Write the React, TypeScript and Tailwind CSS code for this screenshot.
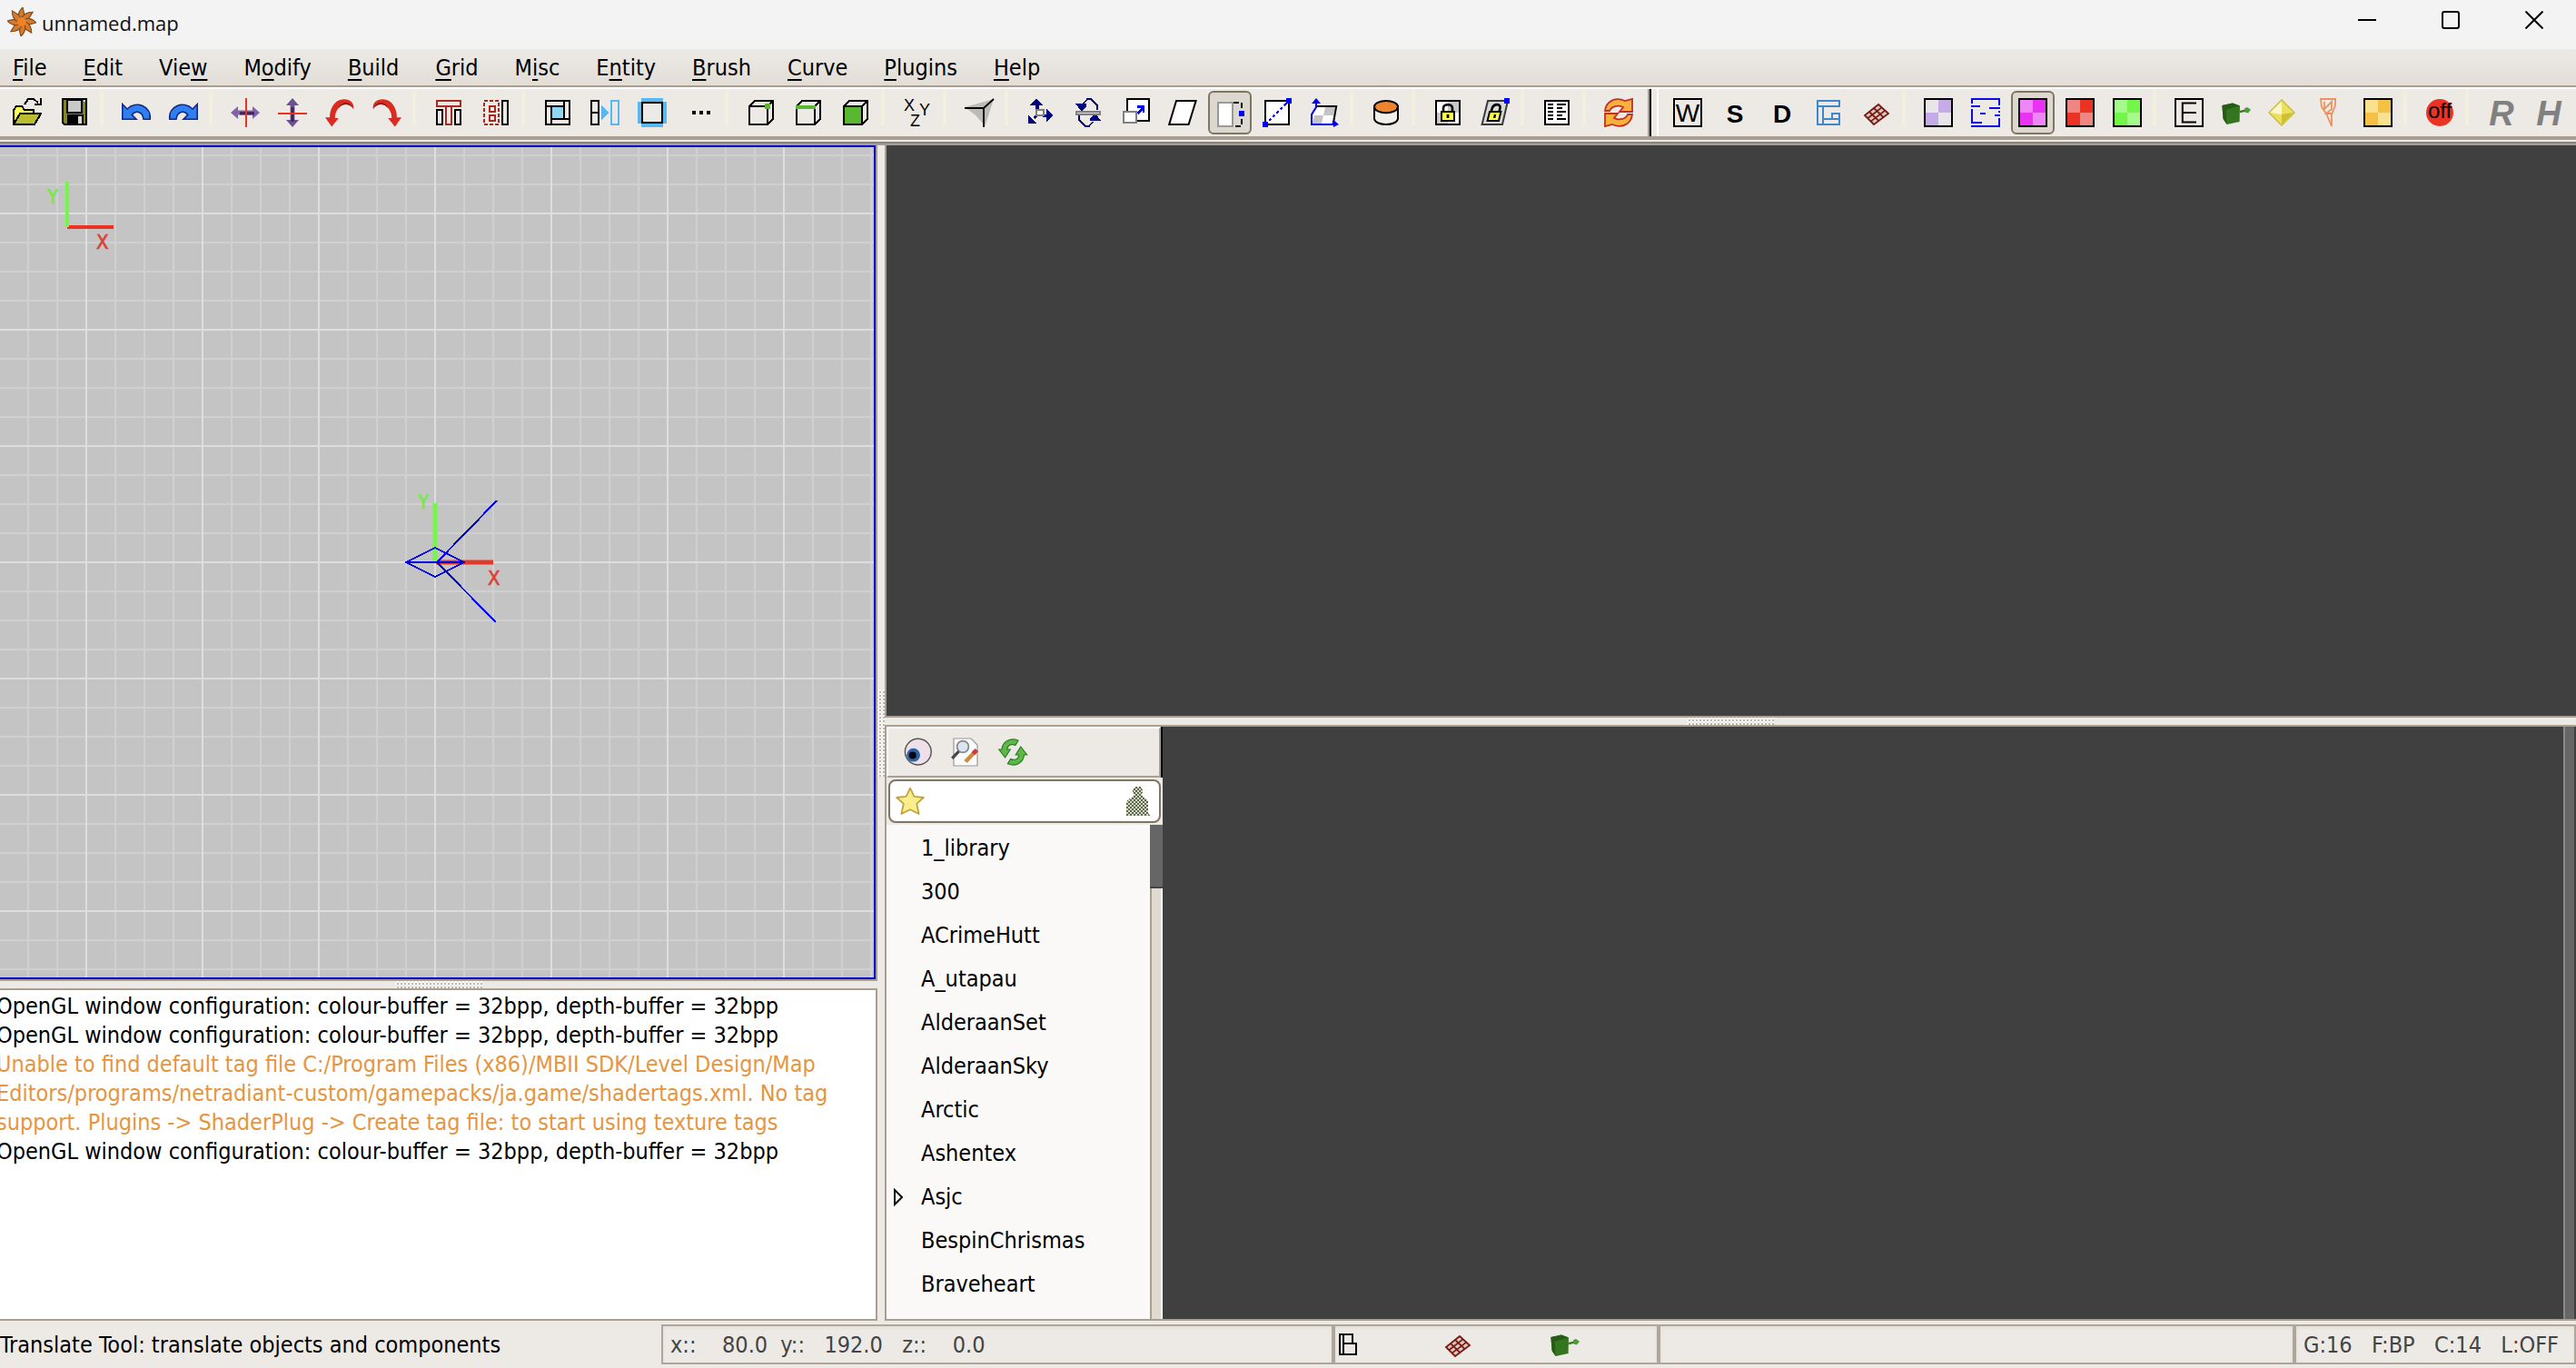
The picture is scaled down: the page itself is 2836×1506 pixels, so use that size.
import { Fragment, type ReactNode } from 'react'
import clsx from 'clsx'

type Tool = { name: string; icon: ReactNode; active?: boolean }

function Icon(props: { children: ReactNode; smooth?: boolean }) {
  return (
    <svg
      viewBox="0 0 16 16"
      className="h-8 w-8 shrink-0 overflow-visible"
      fill="none"
      stroke="none"
      shapeRendering={props.smooth ? 'auto' : 'crispEdges'}
      aria-hidden="true"
    >
      {props.children}
    </svg>
  )
}

function Letter(props: {
  children: string
  size?: number
  y?: number
  fill?: string
  bold?: boolean
  italic?: boolean
}) {
  return (
    <text
      x="8"
      y={props.y ?? 13}
      textAnchor="middle"
      fontFamily="Liberation Sans, sans-serif"
      fontSize={props.size ?? 14}
      fontWeight={props.bold ? 700 : 400}
      fontStyle={props.italic ? 'italic' : 'normal'}
      fill={props.fill ?? '#000'}
    >
      {props.children}
    </text>
  )
}

function Checks(props: { light: string; dark: string }) {
  return (
    <Icon>
      <path d="M0 0H16V16H0Z" fill="#000" />
      <path d="M1 1H15V15H1Z" fill={props.light} />
      <path d="M8 1H15V8H8ZM1 8H8V15H1Z" fill={props.dark} />
    </Icon>
  )
}

function Cube(props: { children?: ReactNode }) {
  return (
    <Icon>
      <path
        d="M1.5 4.5H11.5V14.5H1.5ZM4.5 1.5H14.5V11.5M1.5 4.5L4.5 1.5M11.5 4.5L14.5 1.5M11.5 14.5L14.5 11.5"
        stroke="#000"
      />
      {props.children}
    </Icon>
  )
}

function PatchIcon() {
  return (
    <Icon smooth>
      <path d="M1.5 9.5L9 3.5L14.5 8.5L6.5 14.5Z" fill="#d8c8c4" />
      <path
        d="M1.5 9.5L9 3.5L14.5 8.5L6.5 14.5ZM4 7.5L9.2 12.6M6.5 5.5L11.8 10.6M3.1 11.1L10.8 5.2M4.8 12.8L12.7 6.8"
        stroke="#7a1a10"
        strokeWidth="0.9"
      />
    </Icon>
  )
}

function EntityIcon() {
  return (
    <Icon smooth>
      <path d="M0.2 4L6 2.8L10 4.2L9.8 13L2.8 14.5L0.8 11.5Z" fill="#33761f" />
      <path d="M0.2 4L6 2.8L10 4.2L2.4 6.4L2.8 14.5L0.8 11.5Z" fill="#265c14" />
      <path d="M10 7.6L13 6.8" stroke="#33761f" strokeWidth="1.2" />
      <path d="M12.5 5.6L14 5L16 6.4L14.5 8.2L12.6 7.8Z" fill="#4f9a3c" />
    </Icon>
  )
}

const UNDO = 'M0.4 3.4V11.6H8L5.6 9.2C7.6 6.6 11.4 7.2 12 11.6H15.6C16.4 4.2 8 1.2 3 6Z'
const ROTATE =
  'M15.6 6C13.6 2.8 9.6 2.6 7.2 5.6C5.8 7.4 5.4 9 5.4 11L7.4 11L3.6 15.8L0 10.6H2.6C2.4 8 3.5 4.2 6.2 2C9.8 -0.8 16.4 0.6 15.6 6Z'
const HARROW = 'M0 8L4 4.5V6.8H12V4.5L16 8L12 11.5V9.2H4V11.5Z'

const mainTools: Tool[][] = [
  [
    {
      name: 'Open',
      icon: (
        <Icon>
          <path d="M0.5 14V6.5L2 4.5H5L6.5 6.5H11.5V9" fill="#ffff5c" stroke="#000" />
          <path d="M0.5 14.5L4 8.5H15.5L12 14.5Z" fill="#bcbc30" stroke="#000" />
          <path d="M6.5 3.5L8.5 0.5H11.5L14 2.5M15.5 0V3.5H12" stroke="#000" />
        </Icon>
      ),
    },
    {
      name: 'Save',
      icon: (
        <Icon>
          <path d="M1.5 0.5H14.5V14.5H2.5L1.5 13.5Z" fill="#858528" stroke="#000" />
          <path d="M4 1H12V8H4Z" fill="#c8c8c8" stroke="#000" strokeWidth="0.6" />
          <path d="M4 9H13V14H4Z" fill="#000" />
          <path d="M10 10H12V14H10ZM13 1H14V2H13Z" fill="#d8d8d8" />
        </Icon>
      ),
    },
  ],
  [
    {
      name: 'Undo',
      icon: (
        <Icon smooth>
          <path d={UNDO} fill="#2f7fee" stroke="#10298c" strokeWidth="0.8" />
        </Icon>
      ),
    },
    {
      name: 'Redo',
      icon: (
        <Icon smooth>
          <path d={UNDO} transform="matrix(-1 0 0 1 16 0)" fill="#2f7fee" stroke="#10298c" strokeWidth="0.8" />
        </Icon>
      ),
    },
  ],
  [
    {
      name: 'Flip horizontally',
      icon: (
        <Icon smooth>
          <path d={HARROW} fill="#8163a8" />
          <path d="M5 7.6H13V9.2H5Z" fill="#3d2558" />
          <path d="M8.5 0V16" stroke="#ea3323" />
        </Icon>
      ),
    },
    {
      name: 'Flip vertically',
      icon: (
        <Icon smooth>
          <path d={HARROW} transform="rotate(90 8 8)" fill="#6d5092" />
          <path d="M7.2 5H8.8V13H7.2Z" fill="#3d2558" />
          <path d="M0 8.5H16" stroke="#ea3323" />
        </Icon>
      ),
    },
    {
      name: 'Rotate anticlockwise',
      icon: (
        <Icon smooth>
          <path d={ROTATE} fill="#d92b20" />
          <path d="M15.6 6C13.6 2.8 9.6 2.6 7.2 5.6C9 1.8 13.6 1 15.6 6Z" fill="#8c1812" />
        </Icon>
      ),
    },
    {
      name: 'Rotate clockwise',
      icon: (
        <Icon smooth>
          <g transform="matrix(-1 0 0 1 16 0)">
            <path d={ROTATE} fill="#d92b20" />
            <path d="M15.6 6C13.6 2.8 9.6 2.6 7.2 5.6C9 1.8 13.6 1 15.6 6Z" fill="#8c1812" />
          </g>
        </Icon>
      ),
    },
  ],
  [
    {
      name: 'Select touching',
      icon: (
        <Icon>
          <path d="M1.5 6.5H4.5V14.5H1.5ZM11.5 6.5H14.5V14.5H11.5Z" stroke="#000" />
          <path d="M1.5 1.5H14.5V4.5H1.5ZM6.5 4.5H9.5V14.5H6.5Z" stroke="#a52a22" />
        </Icon>
      ),
    },
    {
      name: 'Select inside',
      icon: (
        <Icon>
          <path d="M1.5 1.5H9.5V14.5H1.5Z" stroke="#a52a22" strokeDasharray="2 1" />
          <path d="M4.5 4.5H7.5V7.5H4.5ZM4.5 9.5H7.5V12.5H4.5Z" stroke="#a52a22" />
          <path d="M11.5 1.5H14.5V14.5H11.5Z" stroke="#000" />
        </Icon>
      ),
    },
  ],
  [
    {
      name: 'Hollow',
      icon: (
        <Icon>
          <path d="M5 5H11V11H5Z" fill="#8fd6f5" />
          <path d="M1.5 1.5H14.5V14.5H1.5ZM4.5 4V11.5H14M1.5 4.5H11.5M11.5 2V11.5M4.5 11V14" stroke="#000" />
        </Icon>
      ),
    },
    {
      name: 'Merge',
      icon: (
        <Icon>
          <path d="M0.5 1.5H4.5V14.5H0.5ZM0.5 8H4.5" stroke="#000" />
          <path d="M6 4L10 8L6 12Z" fill="#59b7f2" />
          <path d="M11.5 1.5H15.5V14.5H11.5Z" stroke="#59b7f2" />
        </Icon>
      ),
    },
    {
      name: 'Make room',
      icon: (
        <Icon>
          <path d="M2 0H14V2H16V14H14V16H2V14H0V2H2Z" fill="#59b7f2" />
          <path d="M2.5 2.5H13.5V13.5H2.5Z" fill="#edeae6" stroke="#000" />
        </Icon>
      ),
    },
    {
      name: 'More',
      icon: (
        <Icon>
          <path d="M4 7H6V9H4ZM8 7H10V9H8ZM12 7H14V9H12Z" fill="#000" />
        </Icon>
      ),
    },
  ],
  [
    {
      name: 'Select vertices',
      icon: (
        <Cube>
          <path d="M10 3H13V6H10Z" fill="#5ab830" />
        </Cube>
      ),
    },
    {
      name: 'Select edges',
      icon: (
        <Cube>
          <path d="M1 4H12V6H1Z" fill="#5ab830" />
        </Cube>
      ),
    },
    {
      name: 'Select faces',
      icon: (
        <Cube>
          <path d="M2 5H11V14H2Z" fill="#5ab830" />
        </Cube>
      ),
    },
  ],
  [
    {
      name: 'Change views',
      icon: (
        <Icon smooth>
          <g fontFamily="Liberation Sans, sans-serif" fontSize="9" fill="#000">
            <text x="0.5" y="7">X</text>
            <text x="9" y="9.5">Y</text>
            <text x="4" y="15.5">Z</text>
          </g>
        </Icon>
      ),
    },
  ],
  [
    {
      name: 'Show angles',
      icon: (
        <Icon smooth>
          <path d="M0 5L16 0.5L11 16C9 12 6 9 0 5Z" fill="#bdbbb8" />
          <path d="M0 5.5H10.5V16M10.5 5.5L16 0.5" stroke="#000" strokeWidth="0.9" />
        </Icon>
      ),
    },
  ],
  [
    {
      name: 'Translate',
      icon: (
        <Icon>
          <path d="M5.5 0L9 4H7V6H5V4H2ZM11 6L15 9.5L11 13V10.5H9V9H11ZM1 9.5L5.5 14H1ZM3.5 10.5L5 9L6 10L4.5 11.5Z" fill="#00007d" />
          <path d="M5.5 6.5H9.5V9.5H5.5Z" fill="#fff" stroke="#808080" />
        </Icon>
      ),
    },
    {
      name: 'Rotate',
      icon: (
        <Icon>
          <path d="M1 3H7V4.5L4.5 7H4ZM15 12.5H9V11L12 8.5Z" fill="#00007d" />
          <path d="M5.5 3L7.5 0.5H9.5L13 4V6.5M10.5 13L8.5 15.5H6.5L3 12V9.5" stroke="#00007d" strokeWidth="0.8" />
          <path d="M1.5 7.5H14.5V9H1.5Z" fill="#d8d8d8" stroke="#808080" strokeWidth="0.7" />
        </Icon>
      ),
    },
    {
      name: 'Scale',
      icon: (
        <Icon>
          <path d="M3.5 0.5H15.5V12.5H3.5Z" fill="#fff" stroke="#000" />
          <path d="M9 4H13V8H12V6.5L9.5 9L8.5 8L11 5.5H9Z" fill="#0000f0" />
          <path d="M1.5 7.5H8.5V13.5H1.5Z" fill="#fff" stroke="#808080" />
        </Icon>
      ),
    },
    {
      name: 'Skew',
      icon: (
        <Icon smooth>
          <path d="M4.5 1.5H15.3L11.3 14.5H0.6Z" fill="#fff" stroke="#000" />
        </Icon>
      ),
    },
    {
      name: 'Resize',
      active: true,
      icon: (
        <Icon>
          <path d="M1.5 2.5H9.5V15.5H1.5Z" fill="#fff" stroke="#999" />
          <path d="M10 2.5H14.5V15.5H10" stroke="#000" strokeDasharray="3 1.5" />
          <path d="M13 7H16V10H13Z" fill="#0000f5" />
        </Icon>
      ),
    },
    {
      name: 'Clipper',
      icon: (
        <Icon>
          <path d="M1.5 1.5H14.5V14.5H1.5Z" fill="#fff" stroke="#000" />
          <path d="M3.5 12.5L13 3" stroke="#0000f5" strokeWidth="0.8" strokeDasharray="1.5 1.5" />
          <path d="M13 0H16V3H13ZM0 13H3V16H0Z" fill="#0000f5" />
        </Icon>
      ),
    },
    {
      name: 'Transform',
      icon: (
        <Icon smooth>
          <path d="M3.2 4.5H14.6L12.8 14.5H1Z" fill="#fff" />
          <path d="M8.5 5H14L13 9.5H7.5ZM2.5 9.5H7.5L6.5 14H1.5Z" fill="#c4c4c4" />
          <path d="M3.2 4.5H14.6L12.8 14.5" stroke="#000" />
          <path d="M3.5 2V5L1 9V14.5H14" stroke="#0000f0" />
          <path d="M3.5 0L6 3H1ZM13 12L16 14.5L13 16Z" fill="#0000f0" />
        </Icon>
      ),
    },
  ],
  [
    {
      name: 'Caulk selection',
      icon: (
        <Icon smooth>
          <path d="M1.5 4.5V11.5C2.5 15.5 13.5 15.5 14.5 11.5V4.5Z" fill="#f1efec" stroke="#000" />
          <ellipse cx="8" cy="4.8" rx="6.5" ry="3.3" fill="#ee8430" stroke="#000" />
        </Icon>
      ),
    },
  ],
  [
    {
      name: 'Texture lock',
      icon: (
        <Icon smooth>
          <path d="M1.5 1.5H14.5V14.5H1.5Z" fill="#fff" />
          <path d="M8 2H14V8H8ZM2 8H8V14H2Z" fill="#c8c8c8" />
          <path d="M1.5 1.5H14.5V14.5H1.5Z" stroke="#000" />
          <path d="M5.5 7.5V5.5C5.5 3 10.5 3 10.5 5.5V7.5" stroke="#000" strokeWidth="1.3" />
          <path d="M4.5 7.5H11.5V12.5H4.5Z" fill="#ffff4c" stroke="#000" />
          <path d="M7.3 9H8.7V11H7.3Z" fill="#000" />
        </Icon>
      ),
    },
    {
      name: 'Texture vertex lock',
      icon: (
        <Icon smooth>
          <path d="M4 1.5H15L12 14.5H0.8Z" fill="#d8d8d8" stroke="#3a3a3a" />
          <path d="M5.8 7.5L6.5 5.2C7.5 3 11 3 10.8 5.2L10.3 7.5" stroke="#000" strokeWidth="1.3" />
          <path d="M5 7.5H11.2L10 12.5H3.8Z" fill="#ffff4c" stroke="#000" />
          <path d="M7.4 9H8.6L8.2 11H7Z" fill="#000" />
          <path d="M13 0H16V3H13Z" fill="#0000f5" />
        </Icon>
      ),
    },
  ],
  [
    {
      name: 'Entity list',
      icon: (
        <Icon>
          <path d="M1.5 1.5H14.5V14.5H1.5Z" fill="#fff" stroke="#000" />
          <path d="M3 3.5H6M3 5.5H6M3 7.5H6M3 9.5H6M3 11.5H6M8 3.5H13M8 5.5H11M8 7.5H13M8 9.5H11M8 11.5H13" stroke="#000" strokeWidth="0.9" />
        </Icon>
      ),
    },
  ],
  [
    {
      name: 'Refresh models',
      icon: (
        <Icon smooth>
          <g fill="#f7b13c" stroke="#bf3122" strokeWidth="0.9">
            <path d="M0.5 7C1 2 6 -1 11.5 1.5L15.5 0.5V7.5H8.5L10.5 5C7.5 3.6 4 4.5 3 7Z" />
            <path d="M15.5 9C15 14 10 17 4.5 14.5L0.5 15.5V8.5H7.5L5.5 11C8.5 12.4 12 11.5 13 9Z" />
          </g>
        </Icon>
      ),
    },
  ],
]

const filterTools: Tool[][] = [
  [
    {
      name: 'World',
      icon: (
        <Icon smooth>
          <path d="M0.5 0.5H15.5V15.5H0.5Z" stroke="#000" />
          <Letter>W</Letter>
        </Icon>
      ),
    },
    { name: 'Structural', icon: <Icon smooth><Letter bold y={13.5}>S</Letter></Icon> },
    { name: 'Detail', icon: <Icon smooth><Letter bold y={13.5}>D</Letter></Icon> },
    {
      name: 'Areaportals',
      icon: (
        <Icon>
          <path d="M1.5 1.5H13.5V4.5H1.5ZM1.5 4.5H4.5V14.5H1.5ZM4.5 11.5H13.5V14.5H4.5M9.5 11V8.5H13.5V11" stroke="#3f87c8" />
        </Icon>
      ),
    },
    { name: 'Patches', icon: <PatchIcon /> },
  ],
  [
    { name: 'Caulk', icon: <Checks light="#e9e6ea" dark="#c6abe8" /> },
    {
      name: 'Clips',
      icon: (
        <Icon>
          <path d="M0 0.5H16M0 15.5H16M0.5 0V3M0.5 6V13M15.5 0V4M15.5 7V8M15.5 11V16M0 4.5H5M10 5.5H16M5 8.5H8M13 9.5H16M0 13.5H6" stroke="#0a0ae0" />
        </Icon>
      ),
    },
    { name: 'Liquids', active: true, icon: <Checks light="#ef86f7" dark="#e833f2" /> },
    { name: 'Hints', icon: <Checks light="#ee8682" dark="#eb3324" /> },
    { name: 'Botclips', icon: <Checks light="#a4fb8c" dark="#72f648" /> },
  ],
  [
    {
      name: 'Entities',
      icon: (
        <Icon smooth>
          <path d="M0.5 0.5H15.5V15.5H0.5Z" stroke="#000" />
          <path d="M12 2.8H4.4V13.2H12M4.4 8H12" stroke="#000" />
        </Icon>
      ),
    },
    { name: 'Models', icon: <EntityIcon /> },
    {
      name: 'Lights',
      icon: (
        <Icon smooth>
          <path d="M7 1L14 8L7 15L0 8Z" fill="#e9e05c" stroke="#c9b93c" strokeWidth="0.7" />
          <path d="M7 1.6V9L0.6 8Z" fill="#faf5cd" />
          <path d="M7 9L13.4 8L7 14.4Z" fill="#cfc033" />
        </Icon>
      ),
    },
    {
      name: 'Paths',
      icon: (
        <Icon smooth>
          <path d="M2.5 0.5H10.5V4L8.5 9V15.5L5.5 8.5L3 5ZM4.5 2V6L8.5 2V6L5.5 8.5H8.5" stroke="#ee915f" strokeWidth="0.9" />
        </Icon>
      ),
    },
    { name: 'Triggers', icon: <Checks light="#fae18e" dark="#f5c145" /> },
  ],
  [
    {
      name: 'Invert filters',
      icon: (
        <Icon smooth>
          <circle cx="8" cy="8" r="7.5" fill="#ea3323" />
          <Letter size={12} y={11}>off</Letter>
        </Icon>
      ),
    },
  ],
  [
    { name: 'Reset filters', icon: <Icon smooth><Letter bold italic size={19} y={15} fill="#808080">R</Letter></Icon> },
    { name: 'Hide', icon: <Icon smooth><Letter bold italic size={19} y={15} fill="#808080">H</Letter></Icon> },
  ],
]

const menus: [string, number][] = [
  ['File', 0],
  ['Edit', 0],
  ['View', 3],
  ['Modify', 1],
  ['Build', 0],
  ['Grid', 0],
  ['Misc', 1],
  ['Entity', 1],
  ['Brush', 0],
  ['Curve', 0],
  ['Plugins', 0],
  ['Help', 0],
]

const textures = [
  '1_library',
  '300',
  'ACrimeHutt',
  'A_utapau',
  'AlderaanSet',
  'AlderaanSky',
  'Arctic',
  'Ashentex',
  'Asjc',
  'BespinChrismas',
  'Braveheart',
]

const glConfig =
  'OpenGL window configuration: colour-buffer = 32bpp, depth-buffer = 32bpp'

const log = [
  { text: glConfig },
  { text: glConfig },
  {
    text: 'Unable to find default tag file C:/Program Files (x86)/MBII SDK/Level Design/Map Editors/programs/netradiant-custom/gamepacks/ja.game/shadertags.xml. No tag support. Plugins -> ShaderPlug -> Create tag file: to start using texture tags',
    warning: true,
  },
  { text: glConfig },
]

function TitleBar() {
  return (
    <header className="flex h-[54px] shrink-0 items-start justify-between bg-[#f3f3f3]">
      <div className="flex h-12 items-center gap-1.5 pl-2">
        <svg viewBox="0 0 32 32" className="h-8 w-8" aria-hidden="true">
          {[0, 45, 90, 135, 180, 225, 270, 315].map((angle) => (
            <path
              key={angle}
              d="M13 13C11 8 13 4 17 0C18 5 20 9 18 13Z"
              transform={`rotate(${angle} 16 16)`}
              fill="#d97a2b"
              stroke="#7a5228"
              strokeWidth="1.2"
            />
          ))}
          <circle cx="16" cy="16" r="5" fill="#ee8228" />
        </svg>
        <h1 className="pt-0.5 font-['Open_Sans','Noto_Sans',sans-serif] text-[22px] leading-8 text-[#111]">
          unnamed.map
        </h1>
      </div>
      <div className="flex">
        <button type="button" aria-label="Minimize" className="flex h-11 w-23 items-center justify-center">
          <svg viewBox="0 0 20 20" className="h-5 w-5" stroke="#000" strokeWidth="2">
            <path d="M0 10H20" />
          </svg>
        </button>
        <button type="button" aria-label="Maximize" className="flex h-11 w-23 items-center justify-center">
          <svg viewBox="0 0 20 20" className="h-5 w-5" fill="none" stroke="#000" strokeWidth="2">
            <rect x="1" y="1" width="18" height="18" rx="2" />
          </svg>
        </button>
        <button type="button" aria-label="Close" className="flex h-11 w-23 items-center justify-center">
          <svg viewBox="0 0 20 20" className="h-5 w-5" stroke="#000" strokeWidth="2">
            <path d="M0.5 0.5L19.5 19.5M19.5 0.5L0.5 19.5" />
          </svg>
        </button>
      </div>
    </header>
  )
}

function MenuBar() {
  return (
    <nav className="flex h-[42px] shrink-0 items-end gap-10 border-b-2 border-[#a89e92] bg-linear-to-b from-[#edeae6] to-[#e2ddd5] px-[14px]">
      {menus.map(([label, key]) => (
        <button key={label} type="button" className="h-[38px] leading-[38px]">
          {label.slice(0, key)}
          <span className="underline decoration-2 underline-offset-4">{label[key]}</span>
          {label.slice(key + 1)}
        </button>
      ))}
    </nav>
  )
}

function ToolGroups(props: { groups: Tool[][] }) {
  return (
    <>
      {props.groups.map((group, index) => (
        <Fragment key={index}>
          {index > 0 && (
            <div className="flex w-4 shrink-0 px-0.5">
              <div className="h-10 w-1 bg-[#f3efdf]" />
            </div>
          )}
          {group.map((tool) => (
            <button
              key={tool.name}
              type="button"
              title={tool.name}
              aria-label={tool.name}
              aria-pressed={tool.active}
              className={clsx(
                'mx-0.5 mt-0.5 flex h-12 w-12 shrink-0 items-center justify-center rounded-md',
                tool.active && 'border-2 border-[#7f7563] bg-[#dcd8d0]',
              )}
            >
              {tool.icon}
            </button>
          ))}
        </Fragment>
      ))}
    </>
  )
}

function Toolbars() {
  return (
    <div className="flex h-[58px] shrink-0 overflow-hidden border-t-2 border-b-4 border-t-white border-b-[#a89e92]">
      <div className="flex border-r-2 border-[#a89e92] pr-1.5 pl-1">
        <ToolGroups groups={mainTools} />
      </div>
      <div className="w-0.5 shrink-0 bg-black" />
      <div className="ml-1.5 flex grow border-l-2 border-white pl-1.5">
        <ToolGroups groups={filterTools} />
      </div>
    </div>
  )
}

function GridView() {
  return (
    <section
      aria-label="XY view"
      className="min-h-0 flex-[918] border-r-2 border-b-2 border-[#a89e92]"
    >
      <div className="h-full border-t-2 border-r-2 border-b-2 border-[#0000cd] bg-[#c4c4c4]">
        <svg className="h-full w-full" aria-hidden="true">
          <defs>
            <pattern id="minor" x="478" y="456" width="32" height="32" patternUnits="userSpaceOnUse">
              <path d="M1 0V32M0 1H32" stroke="#d0d0d0" strokeWidth="2" />
            </pattern>
            <pattern id="major" x="478" y="456" width="128" height="128" patternUnits="userSpaceOnUse">
              <path d="M1 0V128M0 1H128" stroke="#dedede" strokeWidth="2" />
            </pattern>
          </defs>
          <rect width="100%" height="100%" fill="url(#minor)" />
          <rect width="100%" height="100%" fill="url(#major)" />
          <g fontFamily="DejaVu Sans Condensed, sans-serif" fontSize="22" strokeWidth="0.6">
            <text x="52" y="62" fill="#75e84c" stroke="#75e84c">Y</text>
            <text x="106" y="112" fill="#dc4034" stroke="#dc4034">X</text>
            <text x="460" y="398" fill="#75e84c" stroke="#75e84c">Y</text>
            <text x="537" y="482" fill="#dc4034" stroke="#dc4034">X</text>
          </g>
          <path d="M74 88H125" stroke="#ea3323" strokeWidth="4" />
          <path d="M74 38V88" stroke="#75f64c" strokeWidth="4" />
          <path d="M480 457H543" stroke="#e0382a" strokeWidth="5" />
          <path d="M479 392V457" stroke="#75f64c" strokeWidth="5" />
          <g fill="none" stroke="#0000e0" strokeWidth="2" shapeRendering="crispEdges">
            <path d="M447 457L479 441L511 457L479 473ZM447 457H511M481 457L547 389M481 457L546 523" />
          </g>
        </svg>
      </div>
    </section>
  )
}

function Splitter(props: { vertical?: boolean }) {
  return (
    <div
      className={clsx(
        'flex shrink-0 items-center justify-center bg-[#edeae6]',
        props.vertical ? 'w-2' : 'h-2',
      )}
    >
      <div
        className={clsx(
          'bg-[conic-gradient(#fff_0_25%,#bdb6ab_0_50%,#fff_0_75%,#edeae6_0)] bg-size-[4px_4px]',
          props.vertical ? 'h-24 w-2' : 'h-2 w-24',
        )}
      />
    </div>
  )
}

function Console() {
  return (
    <section
      aria-label="Console"
      className="min-h-0 flex-[362] overflow-hidden border-2 border-l-0 border-[#a89e92] bg-white"
    >
      <div className="-ml-1 pt-0.5 pr-4 leading-8">
        {log.map((line, index) => (
          <p key={index} className={clsx(line.warning && 'text-[#e69540]')}>
            {line.text}
          </p>
        ))}
      </div>
    </section>
  )
}

function TextureBrowser() {
  return (
    <section aria-label="Textures" className="flex min-h-0 flex-[652] border-t-2 border-b-2 border-l-2 border-[#a89e92]">
      <div className="flex w-[304px] shrink-0 flex-col">
        <div className="flex h-14 shrink-0 border-r-2 border-black">
          <div className="flex grow items-center gap-5 border-2 border-t-white border-r-[#a89e92] border-b-[#a89e92] border-l-white pl-4">
            <button type="button" aria-label="Show textures">
              <Icon smooth>
                <circle cx="8.4" cy="7.8" r="7.2" fill="#efdfe8" stroke="#555" strokeWidth="0.7" />
                <circle cx="5.8" cy="9.6" r="3.7" fill="#2c63a8" />
                <circle cx="5.4" cy="9.8" r="2" fill="#05070d" />
              </Icon>
            </button>
            <button type="button" aria-label="Find and replace">
              <Icon smooth>
                <path d="M2 0.5H11.5L15 4V15.5H2Z" fill="#fbfbfb" stroke="#999" strokeWidth="0.6" />
                <circle cx="7" cy="5" r="3.2" fill="#d9e5f3" stroke="#888" strokeWidth="0.9" />
                <path d="M4.8 7.6L1.1 11.4" stroke="#444" strokeWidth="1.6" />
                <path d="M8.5 13.3L13.5 8" stroke="#d08a3a" strokeWidth="2.2" />
                <path d="M12.7 8.8L14.7 6.8" stroke="#d2383a" strokeWidth="2.4" />
              </Icon>
            </button>
            <button type="button" aria-label="Refresh">
              <Icon smooth>
                <g fill="#5cb946" stroke="#2f7a24" strokeWidth="0.6">
                  <path d="M4.3 11L0.9 6.5H2.5C2.7 2.5 7 -0.4 11.5 1.6L9.9 4.2C7.5 3.2 5.5 4.2 5.4 6.5H7.1Z" />
                  <path d="M12.9 5L16.3 9.5H14.7C14.5 13.5 10.2 16.4 5.7 14.4L7.3 11.8C9.7 12.8 11.7 11.8 11.8 9.5H10.1Z" />
                </g>
              </Icon>
            </button>
          </div>
        </div>
        <div className="bg-[#edeae6] p-0.5">
          <label className="flex h-12 items-center rounded-lg border-2 border-[#7f7563] bg-white px-1.5">
            <Icon smooth>
              <path
                d="M8 0.8L10.2 5.4L15.4 6L11.6 9.4L12.8 15L8 12.6L3.2 15L4.4 9.4L0.6 6L5.8 5.4Z"
                fill="#f9ee8c"
                stroke="#c2a23c"
                strokeWidth="0.9"
                strokeLinejoin="round"
              />
            </Icon>
            <input aria-label="Filter textures" className="w-0 grow bg-transparent outline-none" />
            <Icon>
              <defs>
                <pattern id="stipple" width="2" height="2" patternUnits="userSpaceOnUse">
                  <path d="M0 0H1V1H0ZM1 1H2V2H1Z" fill="#5d6847" />
                </pattern>
              </defs>
              <path d="M6 0H9L10 2L9.5 5L13 7.5V14L14 16H1V8L5 5L4.5 2Z" fill="#d3d5c8" />
              <path d="M6 0H9L10 2L9.5 5L13 7.5V14L14 16H1V8L5 5L4.5 2Z" fill="url(#stipple)" />
            </Icon>
          </label>
        </div>
        <div className="flex min-h-0 grow bg-[#faf9f7]">
          <ul className="min-w-0 grow overflow-hidden pt-0.5">
            {textures.map((name) => (
              <li key={name} className="flex h-12 items-center">
                <span className="flex w-[38px] pl-2">
                  {name === 'Asjc' && (
                    <svg viewBox="0 0 10 20" className="h-5 w-[10px]" aria-hidden="true">
                      <path d="M1 2L9 10L1 18Z" fill="none" stroke="#111" strokeWidth="2" />
                    </svg>
                  )}
                </span>
                {name}
              </li>
            ))}
          </ul>
          <div className="w-[14px] border-r-2 border-l-2 border-r-white border-l-[#a89e92] bg-[#e0dad0]">
            <div className="-mx-0.5 h-[70px] border-b-2 border-[#444] bg-[#666]" />
          </div>
        </div>
      </div>
      <div className="flex grow justify-end bg-[#404040] pr-0.5">
        <div className="w-3 border-l-2 border-[#8a8a8a] bg-[#666]" />
      </div>
    </section>
  )
}

function StatusBar() {
  const cell =
    'flex min-w-0 items-center border-2 border-[#afa69a] text-[#444] inset-shadow-sm whitespace-pre'
  return (
    <footer className="flex h-[52px] shrink-0 pt-1 pb-1">
      <div className="flex min-w-0 flex-[728] items-center pt-0.5 whitespace-nowrap">
        Translate Tool: translate objects and components
      </div>
      <div className={clsx(cell, 'flex-[728] pt-0.5 pl-2')}>
        {'x::    80.0  y::   192.0   z::    0.0'}
      </div>
      <div className={clsx(cell, 'flex-[354]')}>
        <div className="grid grow grid-cols-3 pl-0.5">
          <Icon>
            <path d="M1.5 2.5H8.5V7.5H10.5V13.5H1.5ZM3.5 2.5V13.5M3.5 7.5H8.5" stroke="#000" />
          </Icon>
          <PatchIcon />
          <EntityIcon />
        </div>
      </div>
      <div className={clsx(cell, 'flex-[696]')} />
      <div className={clsx(cell, 'flex-[298] pt-0.5 pl-2')}>{'G:16   F:BP   C:14   L:OFF'}</div>
    </footer>
  )
}

export default function App() {
  return (
    <div className="flex h-screen flex-col overflow-hidden bg-[#edeae6] font-['DejaVu_Sans_Condensed','DejaVu_Sans',sans-serif] text-[25px] leading-8 text-black">
      <TitleBar />
      <MenuBar />
      <Toolbars />
      <div className="mt-0.5 h-1 shrink-0 border-t-2 border-b-2 border-t-[#848484] border-b-[#a89e92]" />
      <main className="flex min-h-0 grow">
        <div className="flex min-w-0 flex-[966] flex-col">
          <GridView />
          <Splitter />
          <Console />
        </div>
        <Splitter vertical />
        <div className="flex min-w-0 flex-[1862] flex-col">
          <section aria-label="Camera" className="min-h-0 flex-[628] border-b-2 border-l-2 border-[#a89e92] bg-[#404040]" />
          <Splitter />
          <TextureBrowser />
        </div>
      </main>
      <StatusBar />
    </div>
  )
}
